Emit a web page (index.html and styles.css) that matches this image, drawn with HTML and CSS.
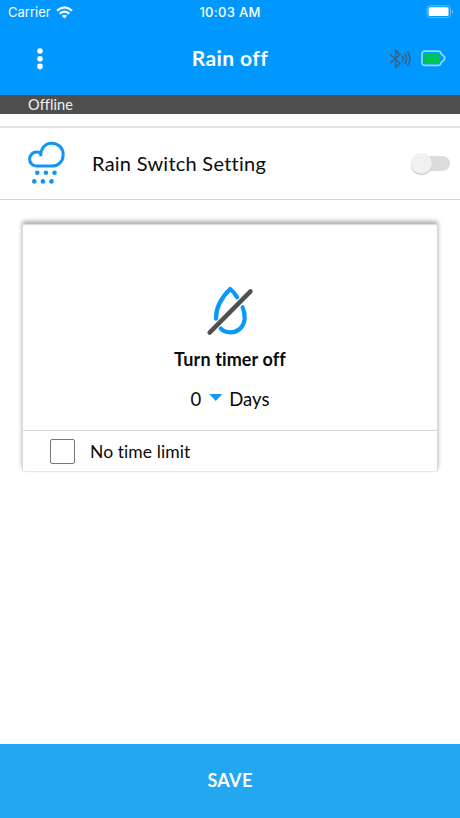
FILE: index.html
```html
<!DOCTYPE html>
<html lang="en">
<head>
<meta charset="utf-8">
<title>Rain off</title>
<link rel="stylesheet" href="styles.css">
</head>
<body>
<header class="top">
  <div class="status">
    <div class="carrier"><span>Carrier</span>
      <svg width="17" height="13" viewBox="0 0 17 13" fill="none" stroke="#fff" stroke-width="2.2"><path d="M1 4.7Q8.5-1.8 16 4.7M3.7 7.7Q8.5 3.6 13.3 7.7"/><path d="M8.5 12.4L5.8 9.7Q8.5 7.6 11.2 9.7Z" fill="#fff" stroke="none"/></svg>
    </div>
    <span class="time">10:03 AM</span>
    <svg class="phone-battery" width="28" height="14" viewBox="0 0 28 14"><rect x="1" y=".8" width="23.5" height="11.8" rx="3.2" fill="none" stroke="#63bdff"/><rect x="2.6" y="2.3" width="20" height="8.8" rx="1.7" fill="#fff"/><path d="M26 4.7q2.1 2 0 4z" fill="#80caff"/></svg>
  </div>
  <div class="navbar">
    <svg class="more" width="8" height="22" viewBox="0 0 8 22" fill="#fff"><circle cx="4" cy="3" r="2.8"/><circle cx="4" cy="10.7" r="2.8"/><circle cx="4" cy="18.4" r="2.8"/></svg>
    <h1><span class="title">Rain off</span></h1>
    <div class="device">
      <svg width="23" height="20" viewBox="0 0 23 20" fill="none" stroke="#3d607e" stroke-width="1.5"><path d="M1 5.3L11 14.2 6.7 18.6V1.2L11 5.4 1 14.3M13.2 6.6q2.2 3.2 0 6.6M15.8 4.7q3.6 5 0 10.2M18.3 2.5q5.5 7.2 0 14.4"/></svg>
      <svg width="25" height="17" viewBox="0 0 25 17"><path d="M4 1.2H17.2Q19.8 1.2 20 3.5L23.6 7.2V9.3L20 12.7Q19.8 15.4 17.2 15.4H4Q1 15.4 1 12.4V4.2Q1 1.2 4 1.2Z" fill="none" stroke="#8cdcff" stroke-width="1.7"/><rect x="3.3" y="3" width="15.5" height="10.8" rx="1" fill="#00c654"/></svg>
    </div>
  </div>
</header>
<div class="offline"><span>Offline</span></div>
<section class="setting">
  <svg class="rain" width="38" height="45" viewBox="0 0 38 45"><path d="M12.8 15.4C12.3 7.8 17.1 2.2 23.6 2.2C30.3 2.2 35.2 7 35.2 13.5C35.2 20.5 30.5 25.1 24 25.1H9.1C4.7 25.1 1.6 22.1 1.6 18.2C1.6 14.2 4.7 11.1 8.6 11.1Q10.8 11.1 12.6 12.3" fill="none" stroke="#1295f5" stroke-width="3"/><g fill="#1295f5"><circle cx="9.3" cy="31.8" r="2.3"/><circle cx="17.9" cy="31.8" r="2.3"/><circle cx="26.5" cy="31.8" r="2.3"/><circle cx="6.3" cy="40.4" r="2.3"/><circle cx="14.9" cy="40.4" r="2.3"/><circle cx="23.5" cy="40.4" r="2.3"/></g></svg>
  <span class="setting-name">Rain Switch Setting</span>
  <div class="toggle"><div class="knob"></div></div>
</section>
<main class="card">
  <div class="timer">
    <svg class="drop" width="50" height="52" viewBox="0 0 50 52" fill="none" stroke-linecap="round"><path d="M31.2 12.3Q28.2 7.3 24.2 4Q9.6 18.2 10 33.7M36.6 22.3C38.3 26 39 29.5 38.6 34C37.7 42 32.2 47.3 24.4 47.3Q18.3 47.3 14.8 43.6" stroke="#0898fb" stroke-width="4.2" stroke-linejoin="round"/><path d="M3.6 47.6L44.5 6.4" stroke="#505050" stroke-width="4.4"/></svg>
    <h2><span>Turn timer off</span></h2>
    <div class="days"><span>0</span><i class="arrow"></i><span class="unit">Days</span></div>
  </div>
  <div class="limit"><div class="checkbox"></div><span class="limit-name">No time limit</span></div>
</main>
<footer class="save"><span>SAVE</span></footer>
</body>
</html>
```
FILE: styles.css
```css
* { box-sizing: border-box; }
body { margin: 0; height: 818px; display: flex; flex-direction: column; background: #fff; color: #0b0b0b; font-family: Lato, sans-serif; font-variant-ligatures: none; overflow: hidden; }
svg { display: block; flex: none; }
span { white-space: nowrap; }
.top { height: 95px; background: #0098ff; color: #fff; flex: none; }
.status { height: 24px; display: grid; grid-template-columns: 1fr auto 1fr; align-items: center; font: 13px Inter, sans-serif; padding: 0 6px 0 8px; }
.carrier { display: flex; gap: 5px; align-items: center; letter-spacing: 0; }
.time { font-weight: 500; letter-spacing: .3px; margin-right: 2px; }
.phone-battery { justify-self: end; }
.navbar { height: 71px; display: grid; grid-template-columns: 1fr auto 1fr; align-items: center; padding: 0 14px 2px 36px; }
.navbar h1 { margin: 0 22px 2px 0; font-size: 21px; line-height: 24px; letter-spacing: .4px; }
.device { display: flex; gap: 9px; align-items: center; justify-self: end; }
.offline { height: 19px; background: #4f4e4f; color: #f2f2f2; padding-left: 28px; font-size: 14.5px; line-height: 19px; letter-spacing: .1px; flex: none; }
.setting { margin-top: 12px; height: 74px; border-top: 2px solid #e1e1e1; border-bottom: 1px solid #d5d5d5; display: flex; align-items: center; padding: 0 10px 0 28px; flex: none; }
.setting-name { margin: 0 0 2px 26px; font-size: 20px; letter-spacing: .25px; }
.toggle { margin-left: auto; width: 36px; height: 15px; border-radius: 8px; background: #dcdcdc; display: flex; align-items: center; }
.knob { width: 21px; height: 21px; margin-left: -3px; flex: none; border-radius: 50%; background: #f1f1f1; box-shadow: 0 1px 1px #bbb; }
.card { margin: 24px 22px 0; height: 248px; border: 1px solid #dadada; border-bottom-color: #e8e8e8; border-radius: 3px; box-shadow: 0 -3px 4px #b0b0b0; flex: none; }
.timer { height: 206px; border-bottom: 1px solid #d4d4d4; display: flex; flex-direction: column; align-items: center; padding-top: 60px; }
.drop { margin-left: 2px; }
.timer h2 { margin: 10px 0 0; font-size: 18px; line-height: 24px; letter-spacing: .12px; }
.days { margin-top: 16px; display: flex; align-items: center; font-size: 18.5px; line-height: 24px; }
.arrow { width: 13px; height: 7px; margin: 0 7px 3px 8px; background: #1299f5; clip-path: polygon(0 0, 100% 0, 50% 100%); }
.limit { height: 40px; display: flex; align-items: center; padding-left: 27px; }
.checkbox { width: 25px; height: 25px; border: 1px solid #777; border-radius: 2px; }
.limit-name { margin-left: 15px; font-size: 17.5px; letter-spacing: .08px; }
.save { margin-top: auto; height: 74px; padding-bottom: 2px; background: #22a7f0; color: #fff; display: flex; align-items: center; justify-content: center; font-size: 18px; font-weight: 700; letter-spacing: .3px; flex: none; }
```
